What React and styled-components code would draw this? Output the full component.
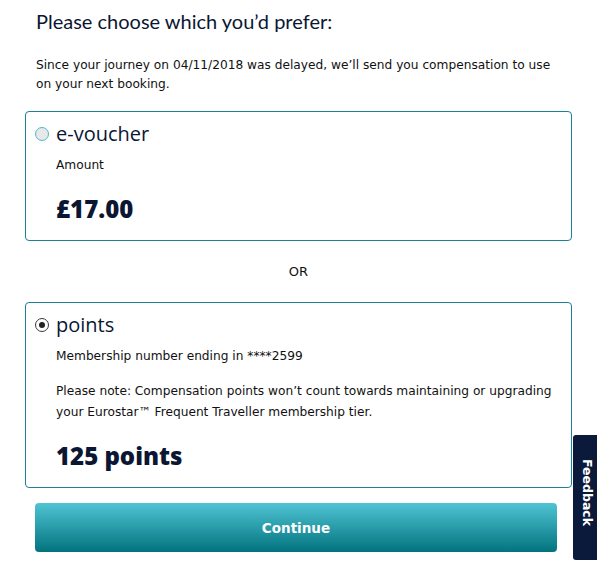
import styled, { createGlobalStyle } from "styled-components";

const GlobalStyle = createGlobalStyle`
  body {
    margin: 0;
    background: #fff;
    font-family: "DejaVu Sans", Tahoma, sans-serif;
    color: #0b1633;
  }
`;

export default function App() {
  return (
    <>
      <GlobalStyle />
      <Page>
        <Title>Please choose which you’d prefer:</Title>
        <Intro>
          Since your journey on 04/11/2018 was delayed, we’ll send you compensation to use
          on your next booking.
        </Intro>

        <Option>
          <OptionHead>
            <Radio />
            <OptionLabel>e-voucher</OptionLabel>
          </OptionHead>
          <OptionBody>
            <Small>Amount</Small>
            <Big $top={18}>£17.00</Big>
          </OptionBody>
        </Option>

        <Or>OR</Or>

        <Option>
          <OptionHead>
            <Radio $checked />
            <OptionLabel>points</OptionLabel>
          </OptionHead>
          <OptionBody>
            <Small>Membership number ending in ****2599</Small>
            <Small $top={14}>
              Please note: Compensation points won’t count towards maintaining or upgrading
              your Eurostar™ Frequent Traveller membership tier.
            </Small>
            <Big $top={18}>125 points</Big>
          </OptionBody>
        </Option>

        <Continue>Continue</Continue>
      </Page>
      <FeedbackTab>Feedback</FeedbackTab>
    </>
  );
}

const Page = styled.div`
  width: 547px;
  margin-left: 25px;
  display: flex;
  flex-direction: column;
`;

const Title = styled.h1`
  margin: 8px 0 0 11px;
  font-family: Lato, "Open Sans", sans-serif;
  font-weight: 400;
  font-size: 20px;
  line-height: 26px;
  color: #0b1633;
`;

const Intro = styled.p`
  margin: 22px 0 0 11px;
  width: 530px;
  font-size: 12.2px;
  line-height: 19px;
  color: #111;
`;

const Option = styled.div`
  margin-top: 17px;
  border: 1px solid #1a8198;
  border-radius: 4px;
  padding: 9px 10px 16px 9px;
`;

const OptionHead = styled.div`
  display: flex;
  align-items: center;
  gap: 7px;
`;

const Radio = styled.span`
  width: 14px;
  height: 14px;
  border-radius: 50%;
  box-sizing: border-box;
  border: 1px solid ${(p) => (p.$checked ? "#3a3a3a" : "#4ab8c9")};
  background: ${(p) => (p.$checked ? "#fff" : "#e8e8e8")};
  display: flex;
  align-items: center;
  justify-content: center;
  &::after {
    content: "";
    display: ${(p) => (p.$checked ? "block" : "none")};
    width: 6px;
    height: 6px;
    border-radius: 50%;
    background: #222;
  }
`;

const OptionLabel = styled.span`
  font-family: "Open Sans", sans-serif;
  font-size: 20px;
  line-height: 26px;
  color: #0b1633;
`;

const OptionBody = styled.div`
  padding-left: 21px;
  margin-top: 8px;
`;

const Small = styled.p`
  margin: ${(p) => p.$top || 0}px 0 0;
  font-size: 12.2px;
  line-height: 21px;
  color: #111;
`;

const Big = styled.div`
  margin-top: ${(p) => p.$top || 0}px;
  font-family: "Open Sans", sans-serif;
  font-weight: 800;
  font-size: 24px;
  line-height: 30px;
  color: #0b1633;
`;

const Or = styled.div`
  margin-top: 23px;
  margin-bottom: 5px;
  text-align: center;
  font-size: 13px;
  line-height: 16px;
  color: #111;
`;

const Continue = styled.button`
  margin: 15px 15px 0 10px;
  height: 49px;
  border: none;
  border-radius: 4px;
  background: linear-gradient(#50c4d4, #02737e);
  color: #fff;
  font-family: "DejaVu Sans", Tahoma, sans-serif;
  font-weight: 700;
  font-size: 13.5px;
  cursor: pointer;
`;

const FeedbackTab = styled.div`
  position: fixed;
  left: 573px;
  top: 435px;
  width: 28px;
  height: 125px;
  background: #0b1a3a;
  border-radius: 3px;
  color: #fff;
  font-family: "DejaVu Sans", sans-serif;
  font-weight: 700;
  font-size: 12.5px;
  writing-mode: vertical-rl;
  display: flex;
  align-items: center;
  justify-content: center;
  padding-bottom: 10px;
  box-sizing: border-box;
`;
